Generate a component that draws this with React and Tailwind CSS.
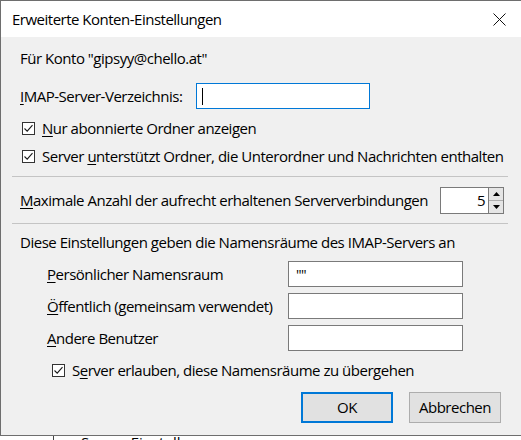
import React from "react";

const font = { fontFamily: "'Open Sans', 'Noto Sans', sans-serif" };

function Check() {
  return (
    <span className="flex h-[13px] w-[13px] shrink-0 items-center justify-center border border-[#333333] bg-white">
      <svg width="11" height="11" viewBox="0 0 11 11" fill="none">
        <path d="M1.5 5.5 L4.2 8.2 L9.5 2.2" stroke="#1a1a1a" strokeWidth="1.1" />
      </svg>
    </span>
  );
}

function Field({ value = "", className = "" }) {
  return (
    <div className={`flex h-[26px] items-center border border-[#7a7a7a] bg-white px-[7px] text-[14px] ${className}`}>
      {value}
    </div>
  );
}

function Separator() {
  return <div className="ml-[-8px] h-px w-[496px] bg-[#c4c4c4]" />;
}

export default function App() {
  return (
    <div className="h-[440px] w-[521px] overflow-hidden bg-white text-black" style={font}>
      <div className="flex h-[436px] flex-col border-b border-l border-t border-[#6e6e6e]">
        {/* title bar */}
        <div className="flex h-[36px] shrink-0 items-center justify-between bg-white pl-[11px] pr-[15px]">
          <span className="text-[15px] tracking-[-0.5px]">Erweiterte Konten-Einstellungen</span>
          <svg width="13" height="13" viewBox="0 0 13 13">
            <path d="M0.5 0.5 L12.5 12.5 M12.5 0.5 L0.5 12.5" stroke="#111" strokeWidth="1" />
          </svg>
        </div>

        {/* body */}
        <div className="flex flex-1 flex-col whitespace-nowrap bg-[#f0f0f0] pl-[19px] pr-[17px] pt-[11px] text-[15px] tracking-[-0.48px]">
          <div className="flex h-[20px] items-center">Für Konto "gipsyy@chello.at"</div>

          <div className="mt-[15px] flex items-center">
            <span className="w-[176px]">
              <u className="underline-offset-2">I</u>MAP-Server-Verzeichnis:
            </span>
            <div className="flex h-[26px] w-[174px] items-center border border-[#0078d7] bg-white pl-[5px]">
              <span className="h-[17px] w-px bg-black" />
            </div>
          </div>

          <label className="mt-[9px] flex h-[20px] items-center gap-[7px] pl-[2px]">
            <Check />
            <span>
              <u className="underline-offset-2">N</u>ur abonnierte Ordner anzeigen
            </span>
          </label>

          <label className="mt-[8px] flex h-[20px] items-center gap-[7px] pl-[2px]">
            <Check />
            <span>
              Server <u className="underline-offset-2">u</u>nterstützt Ordner, die Unterordner und Nachrichten enthalten
            </span>
          </label>

          <div className="mt-[10px]">
            <Separator />
          </div>

          <div className="mt-[10px] flex items-center">
            <span>
              <u className="underline-offset-2">M</u>aximale Anzahl der aufrecht erhaltenen Serververbindungen
            </span>
            <div className="ml-auto flex h-[27px]">
              <div className="flex w-[49px] items-center justify-end border border-[#7a7a7a] bg-white pr-[3px] text-[15px]">
                5
              </div>
              <div className="flex w-[15px] flex-col border-y border-r border-[#7a7a7a]">
                <div className="flex flex-1 items-center justify-center border-b border-[#adadad] bg-[#e5e5e5]">
                  <svg width="7" height="4" viewBox="0 0 7 4">
                    <path d="M3.5 0 L7 4 L0 4 Z" fill="#000" />
                  </svg>
                </div>
                <div className="flex flex-1 items-center justify-center bg-[#e5e5e5]">
                  <svg width="7" height="4" viewBox="0 0 7 4">
                    <path d="M0 0 L7 0 L3.5 4 Z" fill="#000" />
                  </svg>
                </div>
              </div>
            </div>
          </div>

          <div className="mt-[9px]">
            <Separator />
          </div>

          <div className="mt-[8px] flex h-[20px] items-center">
            Diese Einstellungen geben die Namensräume des IMAP-Servers an
          </div>

          <div className="mt-[9px] grid grid-cols-[241px_175px] gap-y-[6px] pl-[27px]">
            <span className="flex items-center">
              <span>
                <u className="underline-offset-2">P</u>ersönlicher Namensraum
              </span>
            </span>
            <Field value={'""'} />
            <span className="flex items-center">
              <span>
                <u className="underline-offset-2">Ö</u>ffentlich (gemeinsam verwendet)
              </span>
            </span>
            <Field />
            <span className="flex items-center">
              <span>
                <u className="underline-offset-2">A</u>ndere Benutzer
              </span>
            </span>
            <Field />
          </div>

          <label className="mt-[9px] flex h-[20px] items-center gap-[7px] pl-[32px]">
            <Check />
            <span>
              S<u className="underline-offset-2">e</u>rver erlauben, diese Namensräume zu übergehen
            </span>
          </label>

          <div className="mt-[12px] flex justify-end gap-[16px] pr-[3px]">
            <button className="h-[31px] w-[92px] border-2 border-[#0078d7] bg-[#e1e1e1] text-[15px]">OK</button>
            <button className="h-[31px] w-[92px] border border-[#adadad] bg-[#e1e1e1] text-[15px]">Abbrechen</button>
          </div>
        </div>
      </div>

      {/* window underneath */}
      <div className="h-[4px] overflow-hidden">
        <div className="flex h-[4px] items-start">
          <span className="ml-[53px] h-[4px] w-px bg-[#444]" />
          <span className="ml-[27px] mt-[-1px] text-[15px] leading-none">Server-Einstellungen</span>
        </div>
      </div>
    </div>
  );
}
